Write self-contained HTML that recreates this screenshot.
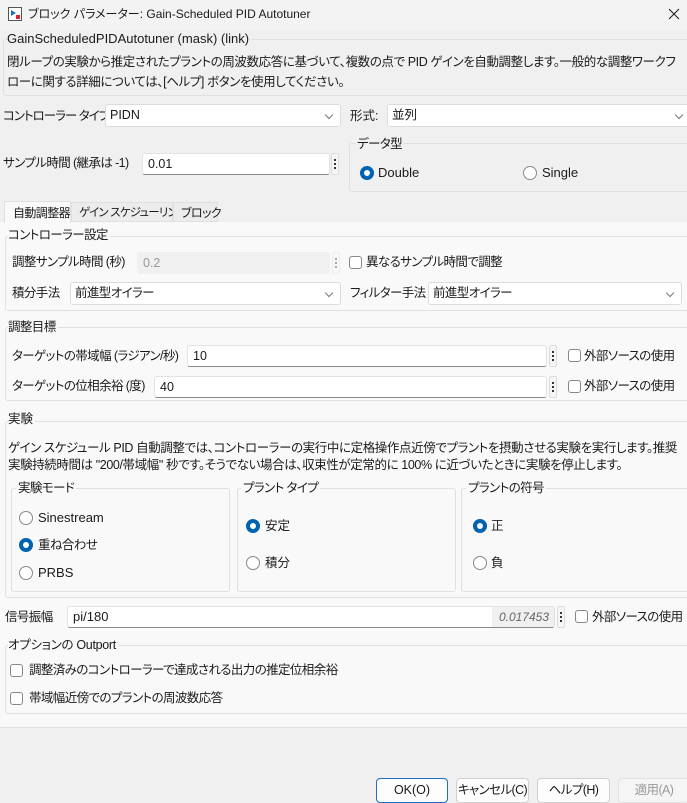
<!DOCTYPE html>
<html><head><meta charset="utf-8"><style>
*{box-sizing:border-box;margin:0;padding:0}
body{width:687px;height:803px;background:#f0f0f0;font-family:"Liberation Sans","Noto Sans CJK JP",sans-serif;font-size:12.5px;font-feature-settings:"palt";color:#1a1a1a;position:relative;overflow:hidden}
.a{position:absolute;white-space:nowrap}
.t{position:absolute;white-space:nowrap;line-height:16px}
.k{letter-spacing:-0.6px}
.d{letter-spacing:-0.4px}
.in{position:absolute;background:#fff;border:1px solid #e3e3e3;border-bottom:1px solid #8a8a8a;border-radius:3px;height:22px;padding-left:5px;line-height:20px}
.sel{position:absolute;background:#fff;border:1px solid #dcdcdc;border-radius:3px;height:23px;padding-left:4px;line-height:21px}
.sel:after{content:"";position:absolute;right:8px;top:7px;width:5px;height:5px;border-right:1px solid #777;border-bottom:1px solid #777;transform:rotate(45deg)}
.dots{position:absolute;width:8px;height:22px;background:#f6f6f6;border:1px solid #ddd;border-radius:2px}
.dots:before{content:"";position:absolute;left:2px;top:5px;width:2px;height:2px;background:#333;box-shadow:0 4px #333,0 8px #333}
.grp{position:absolute;border:1px solid #e0e0e0;border-radius:3px}
.cb{position:absolute;width:13px;height:13px;border:1px solid #888;border-radius:3px;background:#fff}
.r{position:absolute;width:14px;height:14px;border:1px solid #888;border-radius:50%;background:#fff}
.r.on{border:4px solid #0063b1}
.btn{position:absolute;top:778px;height:25px;background:#fdfdfd;border:1px solid #d0d0d0;border-radius:4px;text-align:center;line-height:23px;white-space:nowrap}
</style></head><body>
<div class="a" style="left:0;top:0;width:687px;height:30px;background:#f3f3f3"></div>
<svg class="a" style="left:8px;top:7px" width="14" height="14"><rect x=".5" y=".5" width="13" height="13" fill="#fff" stroke="#555"/><path d="M3 3l5 3-5 3z" fill="#1d6fc0"/><rect x="8" y="8" width="4" height="4" fill="#d23"/></svg>
<div class="t" style="left:28px;top:6px;font-size:12px">ブロック パラメーター: Gain-Scheduled PID Autotuner</div>
<svg class="a" style="left:668px;top:8px" width="12" height="12"><path d="M1 1L11 11M11 1L1 11" stroke="#222" stroke-width="1.1"/></svg>

<div class="grp" style="left:3px;top:39px;width:690px;height:57px;background:#f0f0f0"></div>
<div class="t" style="left:7px;top:31px;background:#f0f0f0;padding-right:3px;font-size:13px">GainScheduledPIDAutotuner (mask) (link)</div>
<div class="t d" style="left:7px;top:54px">閉ループの実験から推定されたプラントの周波数応答に基づいて、複数の点で PID ゲインを自動調整します。一般的な調整ワークフ</div>
<div class="t d" style="left:7px;top:74px">ローに関する詳細については、[ヘルプ] ボタンを使用してください。</div>

<div class="t" style="left:3px;top:108px;letter-spacing:-1px">コントローラー タイプ</div>
<div class="sel" style="left:105px;top:104px;width:236px">PIDN</div>
<div class="t" style="left:350px;top:108px">形式:</div>
<div class="sel" style="left:387px;top:104px;width:304px">並列</div>

<div class="grp" style="left:349px;top:143px;width:345px;height:49px"></div>
<div class="t k" style="left:355px;top:136px;background:#f0f0f0;padding:0 2px">データ型</div>
<div class="r on" style="left:360px;top:166px"></div><div class="t" style="left:378px;top:165px;font-size:13px">Double</div>
<div class="r" style="left:523px;top:166px"></div><div class="t" style="left:542px;top:165px;font-size:13px">Single</div>

<div class="t k" style="left:3px;top:155px">サンプル時間 (継承は -1)</div>
<div class="in" style="left:142px;top:153px;width:188px">0.01</div>
<div class="dots" style="left:331px;top:153px"></div>

<div class="a" style="left:0;top:222px;width:687px;height:506px;background:#f9f9f9;border-bottom:1px solid #e0e0e0"></div>
<div class="t" style="left:4px;top:201px;width:67px;height:22px;background:#f9f9f9;border:1px solid #e0e0e0;border-bottom:none;padding:3px 0 0 8px;font-size:12px;letter-spacing:-0.6px">自動調整器</div>
<div class="t" style="left:71px;top:202px;width:102px;height:20px;background:#ececec;border:1px solid #e0e0e0;padding:2px 0 0 7px;font-size:11.5px;letter-spacing:-0.8px">ゲイン スケジューリング</div>
<div class="t" style="left:173px;top:202px;width:45px;height:20px;background:#ececec;border:1px solid #e0e0e0;padding:2px 0 0 7px;font-size:12px;letter-spacing:-0.6px">ブロック</div>

<div class="grp" style="left:5px;top:236px;width:690px;height:75px"></div>
<div class="t k" style="left:8px;top:227px;background:#f9f9f9;padding-right:2px">コントローラー設定</div>
<div class="t k" style="left:12px;top:254px">調整サンプル時間 (秒)</div>
<div class="in" style="left:137px;top:252px;width:193px;background:#f0f0f0;border-color:#f0f0f0;color:#999">0.2</div>
<div class="dots" style="left:332px;top:252px;opacity:.4"></div>
<div class="cb" style="left:349px;top:256px"></div><div class="t k" style="left:366px;top:254px">異なるサンプル時間で調整</div>
<div class="t k" style="left:12px;top:285px">積分手法</div>
<div class="sel k" style="left:70px;top:282px;width:271px">前進型オイラー</div>
<div class="t k" style="left:350px;top:285px">フィルター手法</div>
<div class="sel k" style="left:428px;top:282px;width:254px">前進型オイラー</div>

<div class="grp" style="left:5px;top:327px;width:690px;height:74px"></div>
<div class="t k" style="left:8px;top:319px;background:#f9f9f9;padding-right:2px">調整目標</div>
<div class="t k" style="left:12px;top:348px">ターゲットの帯域幅 (ラジアン/秒)</div>
<div class="in" style="left:187px;top:345px;width:360px">10</div>
<div class="dots" style="left:549px;top:345px"></div>
<div class="cb" style="left:568px;top:349px"></div><div class="t k" style="left:584px;top:348px">外部ソースの使用</div>
<div class="t k" style="left:12px;top:378px">ターゲットの位相余裕 (度)</div>
<div class="in" style="left:154px;top:376px;width:393px">40</div>
<div class="dots" style="left:549px;top:376px"></div>
<div class="cb" style="left:568px;top:380px"></div><div class="t k" style="left:584px;top:378px">外部ソースの使用</div>

<div class="grp" style="left:5px;top:421px;width:690px;height:177px"></div>
<div class="t" style="left:8px;top:411px;background:#f9f9f9;padding-right:2px">実験</div>
<div class="t d" style="left:8px;top:440px">ゲイン スケジュール PID 自動調整では、コントローラーの実行中に定格操作点近傍でプラントを摂動させる実験を実行します。推奨</div>
<div class="t d" style="left:8px;top:457px">実験持続時間は "200/帯域幅" 秒です。そうでない場合は、収束性が定常的に 100% に近づいたときに実験を停止します。</div>

<div class="grp" style="left:11px;top:488px;width:219px;height:104px"></div>
<div class="t k" style="left:16px;top:480px;background:#f9f9f9;padding:0 2px">実験モード</div>
<div class="r" style="left:19px;top:511px"></div><div class="t" style="left:38px;top:510px;font-size:13px">Sinestream</div>
<div class="r on" style="left:19px;top:538px"></div><div class="t k" style="left:38px;top:537px">重ね合わせ</div>
<div class="r" style="left:19px;top:566px"></div><div class="t" style="left:38px;top:565px;font-size:13px">PRBS</div>

<div class="grp" style="left:237px;top:488px;width:219px;height:104px"></div>
<div class="t k" style="left:241px;top:480px;background:#f9f9f9;padding:0 2px">プラント タイプ</div>
<div class="r on" style="left:246px;top:519px"></div><div class="t" style="left:265px;top:518px">安定</div>
<div class="r" style="left:246px;top:556px"></div><div class="t" style="left:265px;top:555px">積分</div>

<div class="grp" style="left:461px;top:488px;width:230px;height:104px"></div>
<div class="t k" style="left:466px;top:480px;background:#f9f9f9;padding:0 2px">プラントの符号</div>
<div class="r on" style="left:473px;top:519px"></div><div class="t" style="left:491px;top:518px">正</div>
<div class="r" style="left:473px;top:556px"></div><div class="t" style="left:491px;top:555px">負</div>

<div class="t k" style="left:5px;top:609px">信号振幅</div>
<div class="in" style="left:67px;top:606px;width:488px;font-size:13px">pi/180</div>
<div class="a" style="left:492px;top:607px;width:62px;height:20px;background:#f0f0f0;color:#666;font-style:italic;font-size:12px;line-height:20px;text-align:right;padding-right:5px">0.017453</div>
<div class="dots" style="left:557px;top:606px"></div>
<div class="cb" style="left:575px;top:610px"></div><div class="t k" style="left:592px;top:609px">外部ソースの使用</div>

<div class="grp" style="left:5px;top:645px;width:690px;height:69px"></div>
<div class="t" style="left:8px;top:637px;background:#f9f9f9;padding-right:2px;letter-spacing:-0.3px">オプションの Outport</div>
<div class="cb" style="left:10px;top:664px"></div><div class="t k" style="left:29px;top:662px">調整済みのコントローラーで達成される出力の推定位相余裕</div>
<div class="cb" style="left:10px;top:692px"></div><div class="t k" style="left:29px;top:690px">帯域幅近傍でのプラントの周波数応答</div>

<div class="btn" style="left:376px;width:72px;border:1px solid #1e6fc4">OK(O)</div>
<div class="btn k" style="left:456px;width:73px">キャンセル(C)</div>
<div class="btn k" style="left:537px;width:73px">ヘルプ(H)</div>
<div class="btn k" style="left:618px;width:72px;color:#999;background:#f5f5f5;border-color:#e2e2e2">適用(A)</div>
</body></html>
